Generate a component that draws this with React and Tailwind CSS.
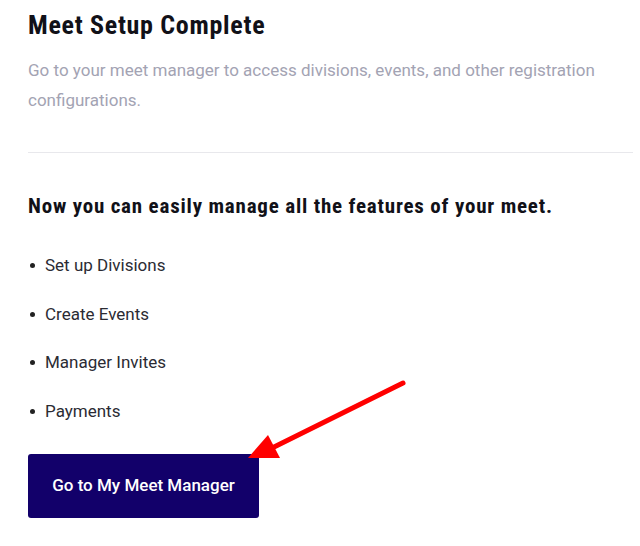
import React from 'react';

const features = ['Set up Divisions', 'Create Events', 'Manager Invites', 'Payments'];

const condensed = { fontFamily: '"Roboto Condensed", "Liberation Sans Narrow", Roboto, sans-serif' };

const App = () => {
    return (
        <div className="relative w-[640px] h-[546px] bg-white overflow-hidden" style={{ fontFamily: 'Roboto, "Liberation Sans", sans-serif' }}>
            <div className="pl-[28px] pr-[7px] pt-[9px]">
                {/* Header */}
                <h1 className="text-[26px] leading-[32px] font-bold tracking-[0.7px] text-[#111118]" style={condensed}>
                    Meet Setup Complete
                </h1>
                <p className="mt-[14px] text-[17px] leading-[30px] text-[#a3a3b3]">
                    Go to your meet manager to access divisions, events, and other registration configurations.
                </p>
                <div className="mt-[37px] border-t border-[#e8e8ec]" />

                {/* Features */}
                <h2 className="mt-[39px] text-[21px] leading-[28px] font-bold tracking-[0.8px] text-[#111118]" style={condensed}>
                    Now you can easily manage all the features of your meet.
                </h2>
                <ul className="mt-[33px] flex flex-col gap-[23.5px]">
                    {features.map((f) => (
                        <li key={f} className="flex items-center text-[17px] leading-[25px] text-[#2b2b33]">
                            <span className="w-[5px] h-[5px] rounded-full bg-[#222] ml-[2px] mr-[10px]" />
                            {f}
                        </li>
                    ))}
                </ul>
                <button className="mt-[30px] w-[231px] h-[64px] rounded-[3px] bg-[#12006a] text-white text-[17px] font-medium">
                    Go to My Meet Manager
                </button>
            </div>

            {/* Red annotation arrow */}
            <svg className="absolute left-0 top-0" width="640" height="546" viewBox="0 0 640 546">
                <line x1="403" y1="383" x2="268" y2="450" stroke="#ff0000" strokeWidth="5" strokeLinecap="round" />
                <polygon points="248,458 268,435 280,458" fill="#ff0000" />
            </svg>
        </div>
    );
};

export default App;
